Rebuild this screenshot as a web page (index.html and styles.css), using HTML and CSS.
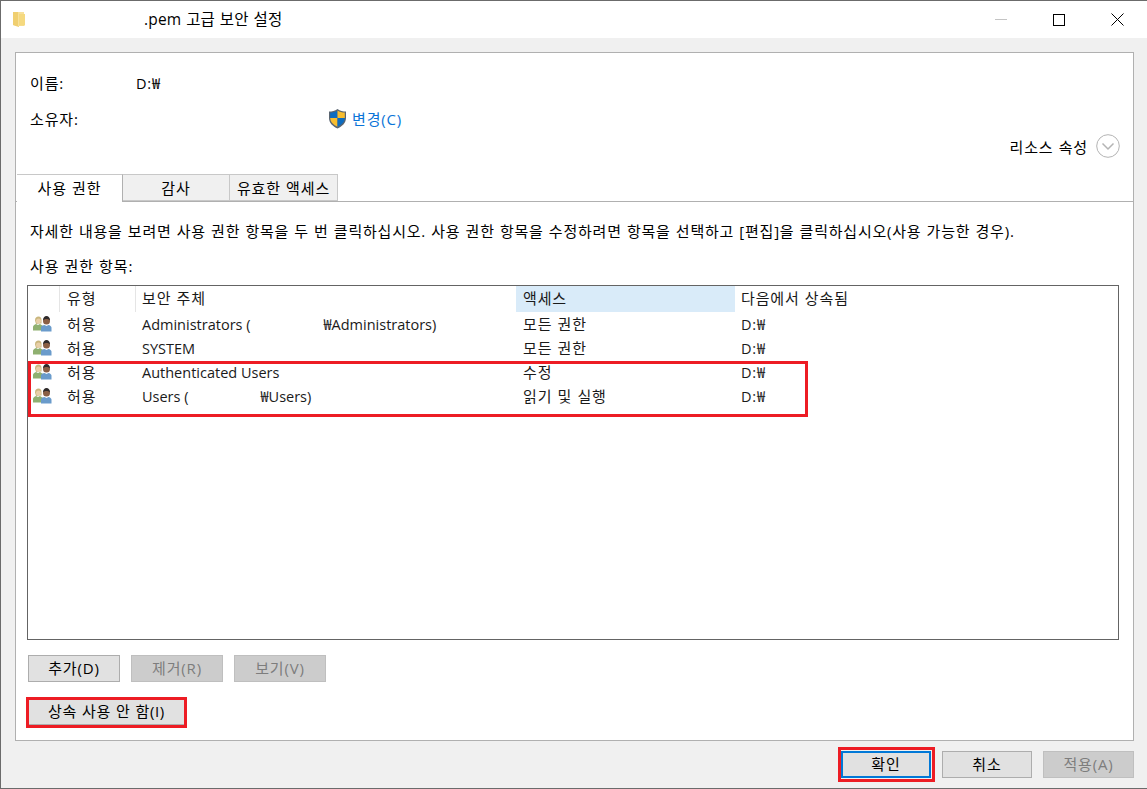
FILE: index.html
```html
<!DOCTYPE html>
<html lang="ko">
<head>
<meta charset="utf-8">
<title>.pem 고급 보안 설정</title>
<link rel="stylesheet" href="styles.css">
</head>
<body>
<div class="window">
  <header class="titlebar">
    <svg class="folder" width="12" height="16" viewBox="0 0 12 16"><path d="M0 1h5l1 1v14l-5-1.500-1-.5z" fill="#f0cf70"/><path d="M5 1h6v14H5z" fill="#f7e09a"/><path d="M6 3h6v11.500H6z" fill="#f5d97f"/></svg>
    <div class="title">.pem 고급 보안 설정</div>
    <div class="winbtns">
      <span class="wb"><span class="min"></span></span>
      <span class="wb"><span class="max"></span></span>
      <span class="wb"><svg width="13" height="13" viewBox="0 0 13 13"><path d="M.5.5l12 12M12.500.5l-12 12" stroke="#000" stroke-width="1" fill="none"/></svg></span>
    </div>
  </header>

  <main class="body">
    <section class="panel">
      <div class="info">
        <div class="info-row name"><span class="lbl">이름:</span><span class="lat path">D:₩</span></div>
        <div class="info-row owner">
          <span class="lbl">소유자:</span>
          <span class="change">
            <svg width="19" height="21" viewBox="0 0 19 21"><path d="M9.500 1C7 3 4 3.500 1 3.500V10c0 5 4 8.500 8.500 10.500C14 18.500 18 15 18 10V3.500C15 3.500 12 3 9.500 1z" fill="#5a6470"/><path d="M9.500 2.500V10H2.200V4.600C5 4.500 7.500 4 9.500 2.500z" fill="#0d6cc0"/><path d="M9.500 2.500c2 1.500 4.500 2 7.300 2.100V10H9.500z" fill="#f8bd2e"/><path d="M2.200 10h7.300v8.800C5.500 17 2.500 14.200 2.200 10z" fill="#f8bd2e"/><path d="M9.500 10h7.300c-.3 4.200-3.300 7-7.300 8.800z" fill="#0d6cc0"/></svg>
            <a class="link">변경(C)</a>
          </span>
        </div>
        <div class="resprop">
          <span>리소스 속성</span>
          <svg width="24" height="24" viewBox="0 0 24 24"><circle cx="12" cy="12" r="11.300" fill="#fff" stroke="#b4b4b4"/><path d="M6.500 9.500L12 15l5.500-5.500" fill="none" stroke="#b4b4b4" stroke-width="1.500"/></svg>
        </div>
      </div>

      <nav class="tabs">
        <span class="tab active">사용 권한</span>
        <span class="tab t2">감사</span>
        <span class="tab t3">유효한 액세스</span>
      </nav>

      <div class="tabpage">
        <p class="desc">자세한 내용을 보려면 사용 권한 항목을 두 번 클릭하십시오. 사용 권한 항목을 수정하려면 항목을 선택하고 [편집]을 클릭하십시오(사용 가능한 경우).</p>
        <p class="listlabel">사용 권한 항목:</p>
        <div class="list">
          <div class="row head">
            <span class="c0"></span>
            <span class="c1">유형</span>
            <span class="c2">보안 주체</span>
            <span class="c3 sorted">액세스</span>
            <span class="c4">다음에서 상속됨</span>
          </div>
          <div class="row">
            <span class="c0"><svg class="ico" width="19" height="16" viewBox="0 0 19 16"><use href="#users"/></svg></span>
            <span class="c1">허용</span><span class="c2 lat">Administrators (<span class="gap1"></span>₩Administrators)</span><span class="c3">모든 권한</span><span class="c4 lat path">D:₩</span>
          </div>
          <div class="row">
            <span class="c0"><svg class="ico" width="19" height="16" viewBox="0 0 19 16"><use href="#users"/></svg></span>
            <span class="c1">허용</span><span class="c2 lat">SYSTEM</span><span class="c3">모든 권한</span><span class="c4 lat path">D:₩</span>
          </div>
          <div class="row">
            <span class="c0"><svg class="ico" width="19" height="16" viewBox="0 0 19 16"><use href="#users"/></svg></span>
            <span class="c1">허용</span><span class="c2 lat">Authenticated Users</span><span class="c3">수정</span><span class="c4 lat path">D:₩</span>
          </div>
          <div class="row">
            <span class="c0"><svg class="ico" width="19" height="16" viewBox="0 0 19 16"><use href="#users"/></svg></span>
            <span class="c1">허용</span><span class="c2 lat">Users (<span class="gap2"></span>₩Users)</span><span class="c3">읽기 및 실행</span><span class="c4 lat path">D:₩</span>
          </div>
          <div class="mark mark-rows"></div>
        </div>
        <div class="actions">
          <button class="btn">추가(D)</button>
          <button class="btn off">제거(R)</button>
          <button class="btn off">보기(V)</button>
        </div>
        <div class="inherit">
          <button class="btn wide">상속 사용 안 함(I)</button>
          <div class="mark mark-inherit"></div>
        </div>
      </div>
    </section>

    <footer class="footer">
      <div class="okwrap"><button class="btn ok">확인</button><div class="mark mark-ok"></div></div>
      <button class="btn">취소</button>
      <button class="btn off apply">적용(A)</button>
    </footer>
  </main>
</div>
<svg class="defs" width="0" height="0"><defs>
  <symbol id="users" viewBox="0 0 19 16">
    <path d="M0 14.500V11c0-1.500 1.500-2.500 3-3l2 1 2-1 3 2v4.500z" fill="#8fb070"/>
    <path d="M2 4.500C2 1.500 3.500.5 5.500.5S8.500 2 8.500 4v3.500H6L3 8z" fill="#c9b67c"/>
    <circle cx="5.500" cy="5" r="2.500" fill="#e8cfa8"/>
    <path d="M8 15.500V11.500c0-1.500 2-2.500 3.500-2.500l2 1 2-1c1.500.3 3 1.300 3 2.500v4z" fill="#6a9bcb"/>
    <circle cx="13.500" cy="5" r="3.500" fill="#8a5f45"/>
    <path d="M10 4.500c0-3 1.500-4.500 3.500-4.500S17 1.500 17 4.500c-1-1.500-2.500-1.500-3.500-1.500S11 3 10 4.500z" fill="#2e2a2a"/>
  </symbol>
</defs></svg>
</body>
</html>
```
FILE: styles.css
```css
* { box-sizing: border-box; }
html, body { margin: 0; padding: 0; height: 100%; }
body { font-family: "Open Sans", "Noto Sans CJK KR", sans-serif; font-size: 15px; letter-spacing: .85px; word-spacing: .5px; color: #000; background: #f0f0f0; overflow: hidden; }
.lat { font-size: 14.500px; letter-spacing: 0; word-spacing: 0; }
.path { letter-spacing: .8px; }
.window { width: 1147px; height: 789px; display: flex; flex-direction: column; border-top: 1px solid #6b6b6b; border-left: 1px solid #6b6b6b; border-bottom: 1px solid #6b6b6b; }
.titlebar { height: 37px; background: #fff; display: flex; align-items: center; padding-left: 12px; flex: none; }
.folder { flex: none; margin-top: -1px; }
.title { margin-left: 119px; margin-top: -2px; font-size: 15.500px; letter-spacing: .2px; flex: 1; }
.winbtns { display: flex; }
.wb { width: 58.500px; height: 37px; display: flex; align-items: center; justify-content: center; }
.min { width: 12px; height: 1px; background: #c4c4c4; }
.max { width: 12px; height: 12px; border: 1px solid #000; }
.body { flex: 1; display: flex; flex-direction: column; padding: 14px 13px 0 14px; }
.panel { height: 689px; background: #fff; border: 1px solid #b0b0b0; display: flex; flex-direction: column; }
.info { height: 121px; padding: 19px 13px 0 14px; position: relative; flex: none; }
.info-row { display: flex; align-items: center; height: 20px; }
.owner { margin-top: 16px; }
.lbl { width: 106px; flex: none; }
.owner .lbl { width: 298px; }
.change { display: flex; align-items: center; gap: 5px; }
.link { color: #0a74d8; }
.resprop { display: flex; justify-content: flex-end; align-items: center; gap: 8px; margin-top: 6px; }
.tabs { display: flex; height: 28px; margin-left: 1px; flex: none; position: relative; z-index: 1; }
.tab { display: flex; align-items: center; justify-content: center; background: #f0f0f0; border: 1px solid #c8c8c8; border-left: 0; height: 27px; padding-bottom: 1px; }
.tab.active { width: 106px; background: #fff; height: 28px; border: 1px solid #c8c8c8; border-bottom: 0; border-right: 1px solid #b0b0b0; border-left: 0; padding-bottom: 2px; }
.t2 { width: 107px; }
.t3 { width: 108px; }
.tabpage { flex: 1; border-top: 1px solid #b0b0b0; margin-top: -1px; padding: 0 14px 0 11px; display: flex; flex-direction: column; }
.desc { margin: 19px 0 0 3px; height: 20px; line-height: 20px; white-space: nowrap; letter-spacing: .78px; }
.listlabel { margin: 15px 0 0 3px; height: 20px; line-height: 20px; }
.list { margin-top: 9px; height: 355px; border: 1px solid #646464; position: relative; background: #fff; width: 1092px; }
.row { display: flex; height: 24px; line-height: 24px; color: #1a1a1a; }
.row.head { height: 26px; line-height: 25px; }
.row .lat { padding-top: 1px; }
.c0 { width: 32px; flex: none; display: flex; align-items: center; padding-left: 5px; }
.c1 { width: 76px; flex: none; padding-left: 7px; }
.c2 { width: 380px; flex: none; padding-left: 6px; white-space: nowrap; }
.c3 { width: 219px; flex: none; padding-left: 7px; }
.c4 { flex: 1; padding-left: 6px; }
.head .c0, .head .c1 { border-right: 1px solid #e5e5e5; }
.sorted { background: #d9ebf9; }
.gap1 { display: inline-block; width: 73px; }
.gap2 { display: inline-block; width: 72px; }
.actions { display: flex; gap: 11px; margin: 15px 0 0 1px; }
.btn { font: inherit; letter-spacing: inherit; word-spacing: inherit; width: 92px; height: 27px; padding: 0 0 2px; background: #e1e1e1; border: 1px solid #adadad; color: #000; }
.btn.off { background: #ccc; border-color: #bfbfbf; color: #7d7d7d; }
.inherit { position: relative; margin: 17px 0 0 1px; width: 158px; }
.btn.wide { width: 157px; height: 26px; display: block; letter-spacing: .65px; padding-bottom: 3px; }
.footer { display: flex; justify-content: flex-end; gap: 11px; padding: 10px 0 0 0; }
.footer .btn { width: 90px; height: 27px; }
.footer .btn.apply { width: 91px; }
.okwrap { position: relative; }
.btn.ok { display: block; border: 2px solid #0078d7; }
.mark { position: absolute; border: 3px solid #ed1c24; pointer-events: none; }
.mark-rows { left: 0; top: 75px; width: 780px; height: 56px; }
.mark-inherit { left: -2px; top: -2px; width: 161px; height: 31px; }
.mark-ok { left: -3px; top: -4px; width: 97px; height: 35px; }
.defs { position: absolute; }
```
